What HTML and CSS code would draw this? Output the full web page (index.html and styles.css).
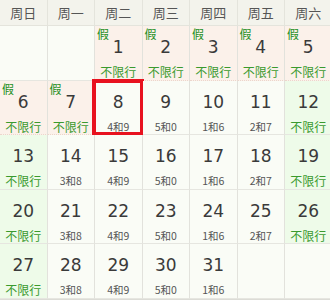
FILE: index.html
```html
<!DOCTYPE html>
<html lang="zh">
<head>
<meta charset="utf-8">
<link rel="stylesheet" href="styles.css">
</head>
<body>
<div class="cal">
  <div class="hd">周日</div><div class="hd">周一</div><div class="hd">周二</div><div class="hd">周三</div><div class="hd">周四</div><div class="hd">周五</div><div class="hd">周六</div>

  <div class="c empty"></div>
  <div class="c empty"></div>
  <div class="c hol"><span class="jia">假</span><span class="num">1</span><span class="free">不限行</span></div>
  <div class="c hol"><span class="jia">假</span><span class="num">2</span><span class="free">不限行</span></div>
  <div class="c hol"><span class="jia">假</span><span class="num">3</span><span class="free">不限行</span></div>
  <div class="c hol"><span class="jia">假</span><span class="num">4</span><span class="free">不限行</span></div>
  <div class="c hol"><span class="jia">假</span><span class="num">5</span><span class="free">不限行</span></div>

  <div class="c hol"><span class="jia">假</span><span class="num">6</span><span class="free">不限行</span></div>
  <div class="c hol"><span class="jia">假</span><span class="num">7</span><span class="free">不限行</span></div>
  <div class="c today"><span class="num">8</span><span class="lim">4和9</span></div>
  <div class="c"><span class="num">9</span><span class="lim">5和0</span></div>
  <div class="c"><span class="num">10</span><span class="lim">1和6</span></div>
  <div class="c"><span class="num">11</span><span class="lim">2和7</span></div>
  <div class="c wk"><span class="num">12</span><span class="free">不限行</span></div>

  <div class="c wk"><span class="num">13</span><span class="free">不限行</span></div>
  <div class="c"><span class="num">14</span><span class="lim">3和8</span></div>
  <div class="c"><span class="num">15</span><span class="lim">4和9</span></div>
  <div class="c"><span class="num">16</span><span class="lim">5和0</span></div>
  <div class="c"><span class="num">17</span><span class="lim">1和6</span></div>
  <div class="c"><span class="num">18</span><span class="lim">2和7</span></div>
  <div class="c wk"><span class="num">19</span><span class="free">不限行</span></div>

  <div class="c wk"><span class="num">20</span><span class="free">不限行</span></div>
  <div class="c"><span class="num">21</span><span class="lim">3和8</span></div>
  <div class="c"><span class="num">22</span><span class="lim">4和9</span></div>
  <div class="c"><span class="num">23</span><span class="lim">5和0</span></div>
  <div class="c"><span class="num">24</span><span class="lim">1和6</span></div>
  <div class="c"><span class="num">25</span><span class="lim">2和7</span></div>
  <div class="c wk"><span class="num">26</span><span class="free">不限行</span></div>

  <div class="c wk"><span class="num">27</span><span class="free">不限行</span></div>
  <div class="c"><span class="num">28</span><span class="lim">3和8</span></div>
  <div class="c"><span class="num">29</span><span class="lim">4和9</span></div>
  <div class="c"><span class="num">30</span><span class="lim">5和0</span></div>
  <div class="c"><span class="num">31</span><span class="lim">1和6</span></div>
  <div class="c empty"></div>
  <div class="c empty"></div>
</div>
</body>
</html>
```

FILE: styles.css
```css
html, body {
  margin: 0;
  padding: 0;
  background: #ffffff;
  overflow: hidden;
}
.cal {
  width: 332.5px;
  display: grid;
  grid-template-columns: repeat(7, 47.5px);
  grid-template-rows: 26px repeat(5, 54.6px);
  font-family: "Noto Sans CJK SC", "DejaVu Sans", sans-serif;
  border-bottom: 1px solid #dcdcd6;
}
.hd {
  box-sizing: border-box;
  background: #f3f3ec;
  border-right: 1px solid #e4e4dc;
  border-bottom: 1px solid #e4e4dc;
  color: #555555;
  font-size: 13px;
  display: flex;
  align-items: center;
  justify-content: center;
}
.c {
  box-sizing: border-box;
  position: relative;
  background: #fafcf6;
  border-right: 1px solid #e2e2dc;
  border-bottom: 1px solid #e6e6e0;
  display: flex;
  flex-direction: column;
  align-items: center;
  padding-top: 10px;
}
.c.hol {
  background: #fbf1ea;
  border-bottom: 1px dotted #ecd6cc;
}
.c.wk {
  background: #eefbe9;
}
.jia {
  position: absolute;
  left: 2px;
  top: 1px;
  color: #238f23;
  font-size: 12px;
  line-height: 14px;
}
.num {
  font-family: "DejaVu Sans", sans-serif;
  font-size: 17px;
  line-height: 22px;
  color: #3a3a3a;
}
.free {
  margin-top: 5px;
  font-size: 12px;
  line-height: 17px;
  color: #3a9a2e;
}
.lim {
  margin-top: 6px;
  font-size: 10.5px;
  line-height: 15px;
  color: #555555;
}
.today::after {
  content: "";
  position: absolute;
  left: -3px;
  top: -2px;
  right: -2px;
  bottom: -2px;
  border: 4px solid #e8121f;
}
```
